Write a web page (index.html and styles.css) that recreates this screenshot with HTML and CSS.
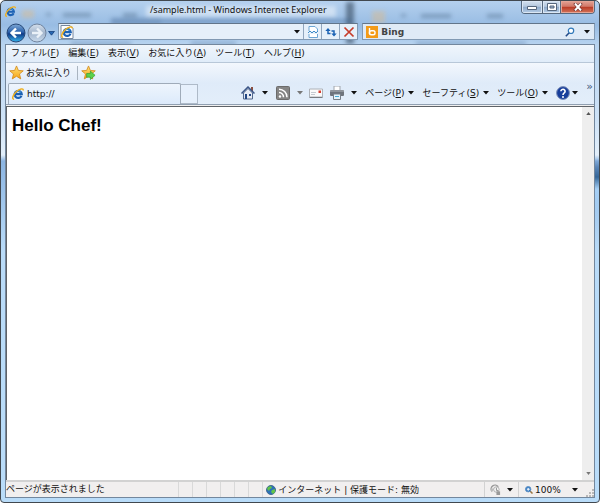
FILE: index.html
```html
<!DOCTYPE html>
<html lang="ja">
<head>
<meta charset="utf-8">
<title>/sample.html - Windows Internet Explorer</title>
<link rel="stylesheet" href="styles.css">
</head>
<body>
<svg class="defs" aria-hidden="true">
  <defs>
    <linearGradient id="blue" x1="0" y1="0" x2="0" y2="1"><stop offset="0" stop-color="#7fa9d6"/><stop offset=".45" stop-color="#2c62ac"/><stop offset=".55" stop-color="#103a86"/><stop offset="1" stop-color="#37b6ee"/></linearGradient>
    <linearGradient id="glass" x1="0" y1="0" x2="0" y2="1"><stop offset="0" stop-color="#d4dfec"/><stop offset=".5" stop-color="#a3b5cc"/><stop offset="1" stop-color="#c9dbed"/></linearGradient>
    <linearGradient id="gold" x1="0" y1="0" x2="0" y2="1"><stop offset="0" stop-color="#ffe27a"/><stop offset="1" stop-color="#f6a414"/></linearGradient>
  </defs>
  <symbol id="ie" viewBox="0 0 16 16">
    <path d="M12.6 10.5A4.7 4.7 0 1 1 13 8.3H4.8" fill="none" stroke="#1c62b4" stroke-width="3"/>
    <path d="M4.2 6.2A4.6 4.6 0 0 1 12 6" fill="none" stroke="#49a6e8" stroke-width="1.2"/>
    <path d="M2.8 14.9C-.8 15.4 1 9 6 4.600 10 1 15.500-.3 15 3.300" fill="none" stroke="#efb020" stroke-width="1.9"/>
  </symbol>
  <symbol id="star" viewBox="0 0 16 16"><path d="M8 1l2 4.800 5.200.4-4 3.400 1.300 5.200L8 12l-4.500 2.800 1.300-5.200-4-3.400L6 5.800z" fill="url(#gold)" stroke="#d48b1c" stroke-width=".9" stroke-linejoin="round"/></symbol>
  <symbol id="down" viewBox="0 0 6 4"><path d="M0 0h6L3 3.500z" fill="currentColor"/></symbol>
</svg>

<div class="window">
  <svg class="haze" aria-hidden="true">
    <g fill="#f2b66a" opacity=".35"><rect x="21" y="9" width="12" height="8"/><rect x="371" y="10" width="13" height="12"/></g>
    <g fill="#3b5878" opacity=".38"><rect x="62" y="12" width="28" height="4"/><rect x="122" y="12" width="14" height="4"/><rect x="45" y="12" width="5" height="3"/><rect x="420" y="13" width="30" height="4"/><rect x="486" y="13" width="16" height="4"/><rect x="400" y="13" width="5" height="3"/></g>
    <rect x="345" y="1" width="8" height="42" fill="#34475e" opacity=".6"/>
    <g fill="#3a6090" opacity=".4"><rect x="110" y="17" width="50" height="7"/><rect x="160" y="18" width="190" height="4"/><rect x="70" y="41" width="60" height="4"/><rect x="190" y="41" width="45" height="4"/><rect x="415" y="41" width="110" height="4"/></g>
    <g fill="#fff" opacity=".45"><rect x="145" y="5" width="190" height="11"/></g>
  </svg>

  <header class="title-bar">
    <svg class="ie-small"><use href="#ie"/></svg>
    <span class="title">/sample.html - Windows Internet Explorer</span>
    <div class="caption-buttons">
      <button class="minimize" aria-label="最小化"><svg viewBox="0 0 10 8"><path d="M.5 3.500h9v3h-9z" fill="#fff" stroke="#56677d"/></svg></button>
      <button class="maximize" aria-label="最大化"><svg viewBox="0 0 10 8"><path d="M.5.5h9v7h-9z" fill="#fff" stroke="#56677d"/><path d="M3 3h4v2H3z" fill="#9eb5d0" stroke="#56677d"/></svg></button>
      <button class="close" aria-label="閉じる"><svg viewBox="0 0 10 8"><path d="M1.500 0L8.500 8M8.500 0L1.500 8" stroke="#6c3434" stroke-width="3.200"/><path d="M2 .5L8 7.500M8 .5L2 7.500" stroke="#fff" stroke-width="2"/></svg></button>
    </div>
  </header>

  <div class="nav-bar">
    <div class="history">
      <button aria-label="戻る"><svg viewBox="0 0 20 20"><circle cx="10" cy="10" r="9" fill="url(#blue)" stroke="#264878"/><path d="M15 10H6M10 5.500L5.500 10l4.500 4.500" fill="none" stroke="#fff" stroke-width="2.400"/></svg></button>
      <button aria-label="進む"><svg viewBox="0 0 20 20"><circle cx="10" cy="10" r="9" fill="url(#glass)" stroke="#71849e"/><path d="M5 10h9M10 5.500l4.500 4.500-4.500 4.500" fill="none" stroke="#eaf1f8" stroke-width="2.400"/></svg></button>
      <button class="recent" aria-label="履歴"><svg viewBox="0 0 8 6"><path d="M.5.5h7L4 5z" fill="#2768b4" stroke="#153f78"/></svg></button>
    </div>
    <div class="address">
      <label class="field" for="url"><svg class="page" viewBox="0 0 14 14"><path d="M1 .5h9L13 3.500v10H1z" fill="#fff" stroke="#7688a0"/><svg x="1" y="1" width="12" height="12"><use href="#ie"/></svg></svg></label>
      <input id="url" type="text" aria-label="アドレス">
      <button class="drop" aria-label="アドレス一覧"><svg class="arrow"><use href="#down"/></svg></button>
      <button class="tool" aria-label="互換表示"><svg viewBox="0 0 12 12"><path d="M2 5V.5h6L10.500 3v2M2 8v3.500h8.500V8" fill="#fff" stroke="#6ca5d4"/><path d="M1 7l2-2 2 2 2-2 2 2 2-2" fill="none" stroke="#3d8bc8"/></svg></button>
      <button class="tool" aria-label="更新"><svg viewBox="0 0 12 12"><path d="M3 4v3.500h2.500M6.500 5H9v3" fill="none" stroke="#1b62b4" stroke-width="1.500"/><path d="M.3 5L3 2l2.700 3zM6.300 7.500L9 10.500l2.700-3z" fill="#1b62b4"/></svg></button>
      <button class="tool" aria-label="中止"><svg viewBox="0 0 12 12"><path d="M1.500 1.500l9 9M10.500 1.500l-9 9" stroke="#c63c2a" stroke-width="1.700"/></svg></button>
    </div>
    <div class="search">
      <svg class="bing" viewBox="0 0 12 12"><path d="M0 0h12v12H0z" fill="#f39b18"/><path d="M3.500 2v6" stroke="#fff" stroke-width="1.400"/><rect x="3.500" y="4.800" width="5.500" height="4" rx="1.800" fill="none" stroke="#fff" stroke-width="1.400"/></svg>
      <input type="text" value="Bing" aria-label="検索">
      <button aria-label="検索"><svg class="lens" viewBox="0 0 10 10"><circle cx="6" cy="3.800" r="2.700" fill="#fff" stroke="#3178b8" stroke-width="1.200"/><path d="M4 6L.8 9.200" stroke="#244b88" stroke-width="1.600"/></svg></button>
      <button aria-label="検索オプション"><svg class="arrow"><use href="#down"/></svg></button>
    </div>
  </div>

  <main class="client">
    <nav class="menu">
      <button>ファイル(<u>F</u>)</button><button>編集(<u>E</u>)</button><button>表示(<u>V</u>)</button><button>お気に入り(<u>A</u>)</button><button>ツール(<u>T</u>)</button><button>ヘルプ(<u>H</u>)</button>
    </nav>
    <div class="bars">
      <div class="favorites">
        <button class="fav"><svg class="star"><use href="#star"/></svg>お気に入り</button>
        <span class="divider"></span>
        <button aria-label="お気に入りバーに追加"><svg class="star" viewBox="0 0 16 16"><use href="#star"/><path d="M6 9h4V6.500l5 4.500-5 4.500V13H6z" fill="#5bd14b" stroke="#2e9b32" stroke-width=".7"/></svg></button>
      </div>
      <div class="tabs-row">
        <button class="tab"><svg class="ie-tab"><use href="#ie"/></svg><span>http://</span></button>
        <button class="new-tab" aria-label="新しいタブ"></button>
        <div class="commands">
          <button class="with-icon" aria-label="ホーム"><svg class="icon" viewBox="0 0 14 14"><path d="M10 1h2v4h-2z" fill="#8a4d3e"/><path d="M2.500 7L7 2.500 11.500 7v6h-9z" fill="#e6ebf4" stroke="#53698e"/><path d="M.5 7.500L7 1l6.500 6.500" fill="none" stroke="#3c5687" stroke-width="1.500"/><path d="M4 8h2v5H4zM8 8h2v2H8z" fill="#244783"/></svg><svg class="arrow"><use href="#down"/></svg></button>
          <button class="with-icon" aria-label="フィード"><svg class="icon" viewBox="0 0 14 14"><rect x=".5" y=".5" width="13" height="13" rx="1" fill="#858585" stroke="#6b6b6b"/><circle cx="4" cy="10.500" r="1.200" fill="#fff"/><path d="M3 6.500a4.500 4.500 0 0 1 4.500 4.800M3 3.200a8 8 0 0 1 8 8" fill="none" stroke="#fff" stroke-width="1.500"/></svg><svg class="arrow dim"><use href="#down"/></svg></button>
          <button class="mail" aria-label="メール"><svg class="icon" viewBox="0 0 14 14"><path d="M.5 3h13v8H.5z" fill="#fafafa" stroke="#aeb2b8"/><path d="M.5 11.500h13" stroke="#777b80"/><path d="M9.500 4.500H12V7H9.500z" fill="#d83c2d"/><path d="M2 6.500h5M2 8.500h4" stroke="#c5cad1"/></svg></button>
          <button class="with-icon" aria-label="印刷"><svg class="icon" viewBox="0 0 14 14"><path d="M4 0h6v5H4z" fill="#fff" stroke="#a0a6ad"/><rect x="0" y="4" width="14" height="6" rx="1" fill="#6e747c"/><path d="M0 5h14" stroke="#b0b5bb"/><path d="M3.500 8h7v5.500h-7z" fill="#e7f4fa" stroke="#777f88"/><path d="M5 10.500h4" stroke="#45aad4"/></svg><svg class="arrow"><use href="#down"/></svg></button>
          <button><span>ページ(<u>P</u>)</span><svg class="arrow"><use href="#down"/></svg></button>
          <button><span>セーフティ(<u>S</u>)</span><svg class="arrow"><use href="#down"/></svg></button>
          <button><span>ツール(<u>O</u>)</span><svg class="arrow"><use href="#down"/></svg></button>
          <button class="help" aria-label="ヘルプ"><svg class="icon" viewBox="0 0 14 14"><circle cx="7" cy="7" r="6.400" fill="#173e9b" stroke="#7b8eb8"/><path d="M4.900 5.300a2.100 2 0 1 1 3.300 1.600Q7 7.700 7 9" fill="none" stroke="#fff" stroke-width="1.600"/><circle cx="7" cy="11" r="1" fill="#fff"/></svg><svg class="arrow"><use href="#down"/></svg></button>
          <button class="more">»</button>
        </div>
      </div>
    </div>
    <section class="viewport">
      <article><h1>Hello Chef!</h1></article>
      <div class="scrollbar"><svg viewBox="0 0 6 4"><path d="M0 4h6L3 0z" fill="#555"/></svg><svg viewBox="0 0 6 4"><path d="M0 0h6L3 4z" fill="#777"/></svg></div>
    </section>
    <footer class="status">
      <span class="message">ページが表示されました</span>
      <span class="cell"></span><span class="cell"></span><span class="cell"></span><span class="cell"></span><span class="cell"></span><span class="cell"></span>
      <span class="zone"><svg viewBox="0 0 10 10"><circle cx="5" cy="5" r="4.500" fill="#2c71ba" stroke="#456c90"/><path d="M2 2l3-1 1 2-2 1-1 2-2-2zM6 5l3-1v3L7 9 5 7z" fill="#63c548"/></svg>インターネット | 保護モード: 無効</span>
      <button class="privacy" aria-label="プライバシー"><svg class="shield" viewBox="0 0 12 12"><path d="M2 8A4 4 0 0 1 9 3" fill="none" stroke="#999" stroke-width="1.500"/><path d="M0 5h5L2 9z" fill="#bbb"/><circle cx="7" cy="6" r="3" fill="#f7f7f7" stroke="#aaa"/><path d="M7 4v3h2" fill="none" stroke="#888"/><path d="M7 8h4v4H7z" fill="#999"/></svg><svg class="arrow"><use href="#down"/></svg></button>
      <button class="zoom"><svg class="glass" viewBox="0 0 8 8"><path d="M4.500 4.500l3 3" stroke="#9a7440" stroke-width="1.500"/><circle cx="3.200" cy="3.200" r="2.700" fill="#2b75c1" stroke="#6594c5"/><path d="M1.800 3.200h3M3.200 1.800v3" stroke="#fff"/></svg>100%<svg class="arrow"><use href="#down"/></svg></button>
      <svg class="grip" viewBox="0 0 8 8"><path d="M6 0h2v2H6zM3 3h2v2H3zM6 3h2v2H6zM0 6h2v2H0zM3 6h2v2H3zM6 6h2v2H6z" fill="#b9b9b9"/></svg>
    </footer>
  </main>
</div>
</body>
</html>
```
FILE: styles.css
```css
* { box-sizing: border-box; }

body {
  margin: 0;
  background: #fff;
  color: #111;
  font: 9px/12px "DejaVu Sans", "Noto Sans CJK JP", sans-serif;
}

button, input {
  margin: 0;
  padding: 0;
  border: 0;
  background: none;
  color: inherit;
  font: inherit;
}

button { display: flex; align-items: center; white-space: nowrap; }
svg { display: block; flex: none; }
.defs { position: absolute; width: 0; height: 0; }
.arrow { width: 6px; height: 4px; }
.dim { color: #777; }

.window {
  position: relative;
  display: flex;
  flex-direction: column;
  min-height: 100vh;
  padding: 0 4px 4px;
  border: 1px solid #41484f;
  border-radius: 5px 5px 4px 4px;
  background:
    linear-gradient(transparent 158px, #5b86b8 166px, #356799 176px, #a5cff5 188px, transparent 230px) right / 5px 100% no-repeat,
    linear-gradient(#b4d0ee, #98bce3 24px, #b8d4f0 44px, #cfe3f7 120px, #e3effa 154px, #8cb5e2 160px, #b9dbf8 250px, #b9dcf9);
}

.haze {
  position: absolute;
  inset: 0;
  width: 100%;
  height: 44px;
  filter: blur(2px);
}

.title-bar { position: relative; display: flex; align-items: flex-start; height: 21px; }
.ie-small { width: 11px; height: 11px; margin-top: 5px; }
.title { flex: 1; margin: 2px 0 0 134px; font-family: "Noto Sans", sans-serif; line-height: 13px; }
.caption-buttons {
  display: flex;
  height: 13px;
  border: 1px solid #56687d;
  border-top: 0;
  border-radius: 0 0 4px 4px;
  overflow: hidden;
}
.caption-buttons button {
  justify-content: center;
  width: 19px;
  background: linear-gradient(#d5e2f0, #b5c8de 45%, #8faaca 50%, #b5cde6);
  box-shadow: inset 0 0 0 1px #dbe7f4;
}
.caption-buttons svg { width: 10px; height: 8px; }
.caption-buttons .minimize { width: 20px; }
.caption-buttons .maximize { border: solid #56687d; border-width: 0 1px; }
.caption-buttons .close {
  width: 33px;
  background: linear-gradient(#e3a295, #d17868 45%, #b93a25 50%, #d4765b);
  box-shadow: inset 0 0 0 1px #e4a596;
}

.nav-bar { position: relative; display: flex; align-items: center; height: 22px; gap: 4px; }
.history { display: flex; align-items: center; gap: 1px; width: 49px; padding-left: 1px; }
.history svg { width: 20px; height: 20px; }
.history .recent svg { width: 7px; height: 5px; }
.address, .search {
  display: flex;
  align-items: stretch;
  height: 17px;
  margin-bottom: 3px;
  border: 1px solid #8199b3;
  border-top-color: #62758a;
  background: #e6f0fa;
}
.address { flex: 4 1 0; min-width: 0; }
.search { flex: 3 1 0; min-width: 0; align-items: center; padding: 0 4px 0 3px; background: #dfeaf6; }
.field { display: flex; align-items: center; padding-left: 1px; }
.page { width: 14px; height: 14px; }
.address input, .search input { flex: 1; min-width: 0; }
.drop { justify-content: center; width: 13px; }
.tool { justify-content: center; width: 18px; border-left: 1px solid #91a6be; background: #e6f0fa; }
.tool svg { width: 12px; height: 12px; }
.bing { width: 12px; height: 12px; margin-right: 3px; }
.search input { font-weight: bold; color: #444; }
.search button + button { margin-left: 9px; }
.lens { width: 10px; height: 10px; }

.client {
  flex: 1;
  display: flex;
  flex-direction: column;
  position: relative;
  border: 1px solid #73879d;
  background: #f0f0f0;
}
.menu {
  display: flex;
  align-items: center;
  gap: 9px;
  height: 18px;
  padding: 0 0 2px 5px;
  border-bottom: 1px solid #b8c7d8;
  background: linear-gradient(#f0f6fc, #e0ecf9);
}
.bars { background: linear-gradient(#f3f7fd, #dfebf9 20px, #e3eefa); }
.favorites { display: flex; align-items: center; height: 20px; padding: 0 0 1px 3px; }
.fav { gap: 2px; }
.star { width: 15px; height: 15px; }
.divider { height: 14px; margin: 0 3px 0 6px; border-left: 1px solid #a9b4c0; }

.tabs-row { display: flex; height: 22px; border-bottom: 1px solid #91a0b1; }
.tab {
  flex: 0 1 173px;
  gap: 3px;
  margin-left: 2px;
  padding-left: 3px;
  border: 1px solid #9fabb9;
  border-bottom: 0;
  border-radius: 2px 2px 0 0;
  background: linear-gradient(#eef5fd, #dceafb);
}
.ie-tab { width: 12px; height: 12px; }
.new-tab { width: 17px; margin-top: 1px; border: 1px solid #aebac8; border-left: 0; background: #e6f0fc; }
.commands { flex: 1; display: flex; align-items: center; justify-content: flex-end; gap: 8px; padding: 0 1px 2px 0; }
.commands button { gap: 4px; }
.commands .with-icon { gap: 7px; }
.commands .mail { margin: 0 -1px 0 -2px; }
.commands .help { gap: 2px; }
.icon { width: 14px; height: 14px; }
.commands .more { align-self: flex-start; font-size: 11px; line-height: 8px; color: #40587c; }

.viewport {
  flex: 1;
  display: flex;
  border: solid #5f6368;
  border-width: 1px 0 0 1px;
  margin-top: 1px;
  background: #fff;
}
article { flex: 1; padding: 7px 5px; }
h1 { margin: 0; font: bold 17px/24px "Liberation Sans", sans-serif; color: #000; }
.scrollbar {
  display: flex;
  flex-direction: column;
  justify-content: space-between;
  align-items: center;
  width: 12px;
  padding: 5px 0;
  background: #eee;
}
.scrollbar svg { width: 5px; height: 3px; }

.status { display: flex; align-items: stretch; height: 17px; border-top: 2px solid #d2d2d2; background: #f1efef; }
.message { flex: 175; line-height: 14px; }
.cell { width: 14px; border-left: 1px solid #d9d9d9; }
.zone { display: flex; flex: 221; align-items: center; gap: 2px; padding-left: 3px; border-left: 1px solid #d9d9d9; white-space: nowrap; }
.zone svg { width: 10px; height: 10px; }
.privacy { gap: 6px; width: 34px; padding-left: 5px; border-left: 1px solid #d2d2d2; }
.shield { width: 11px; height: 11px; }
.zoom { gap: 2px; width: 68px; padding-left: 6px; border-left: 1px solid #d2d2d2; }
.zoom .arrow { margin-left: 9px; }
.glass { width: 8px; height: 8px; }
.grip { align-self: flex-end; width: 8px; height: 8px; }
```
